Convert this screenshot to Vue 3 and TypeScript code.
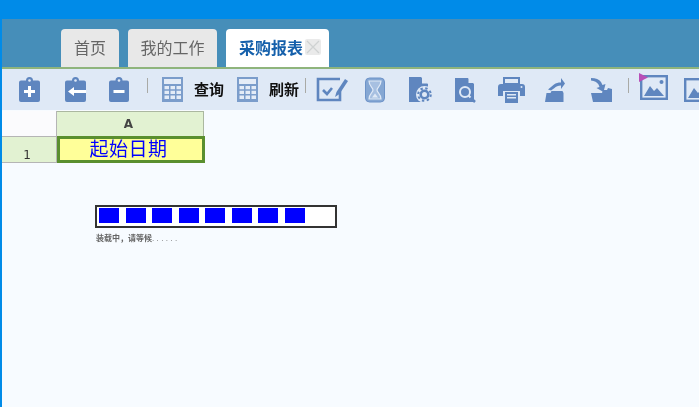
<script setup lang="ts">
const blocks: number[] = [0, 1, 2, 3, 4, 5, 6, 7]
</script>

<template>
  <div class="page">
    <div class="topbar"></div>
    <div class="main">
      <div class="tabs">
        <div class="tab t-home">首页</div>
        <div class="tab t-work">我的工作</div>
        <div class="tab active">
          <span>采购报表</span>
          <span class="close">
            <svg width="14" height="14" viewBox="0 0 14 14"><path d="M1 1L13 13M13 1L1 13" stroke="#cfd2d2" stroke-width="1.3" fill="none" /></svg>
          </span>
        </div>
      </div>
      <div class="toolbar">
        <svg class="ic i1" width="21" height="25" viewBox="0 0 21 25"><path d="M7 3.500a3.500 3.500 0 0 1 7 0h5a2 2 0 0 1 2 2V23a2 2 0 0 1-2 2H2a2 2 0 0 1-2-2V5.500a2 2 0 0 1 2-2z" fill="#5f86bf" /><circle cx="10.500" cy="3.500" r="1.300" fill="#dfe9f6" /><path d="M9 9h3v4h4v3h-4v4H9v-4H5v-3h4z" fill="#fff" /></svg>
        <svg class="ic i2" width="21" height="25" viewBox="0 0 21 25"><path d="M7 3.500a3.500 3.500 0 0 1 7 0h5a2 2 0 0 1 2 2V23a2 2 0 0 1-2 2H2a2 2 0 0 1-2-2V5.500a2 2 0 0 1 2-2z" fill="#5f86bf" /><circle cx="10.500" cy="3.500" r="1.300" fill="#dfe9f6" /><path d="M9 10v3h12v3H9v3l-6-4.500z" fill="#fff" /></svg>
        <svg class="ic i3" width="20" height="25" viewBox="0 0 20 25"><path d="M6.500 3.500a3.500 3.500 0 0 1 7 0H18a2 2 0 0 1 2 2V23a2 2 0 0 1-2 2H2a2 2 0 0 1-2-2V5.500a2 2 0 0 1 2-2z" fill="#5f86bf" /><circle cx="10" cy="3.500" r="1.300" fill="#dfe9f6" /><rect x="4.500" y="13" width="11" height="3" fill="#fff" /></svg>
        <span class="sep s1"></span>
        <svg class="ic i4" width="21" height="25" viewBox="0 0 21 25"><rect x="0" y="0" width="21" height="25" fill="#7b9dcb" /><rect x="2" y="2" width="17" height="5" fill="#e4ecf7" /><path d="M2.500 9h4.500v3.200H2.500zM8.500 9H13v3.200H8.500zM14.500 9h4.500v3.200h-4.500zM2.500 13.700h4.500v3.200H2.500zM8.500 13.700H13v3.200H8.500zM14.500 13.700h4.500v3.200h-4.500zM2.500 18.400h4.500V22H2.500zM8.500 18.400H13V22H8.500zM14.500 18.400h4.500V22h-4.500z" fill="#e4ecf7" /></svg>
        <span class="label l1">查询</span>
        <svg class="ic i5" width="21" height="25" viewBox="0 0 21 25"><rect x="0" y="0" width="21" height="25" fill="#7b9dcb" /><rect x="2" y="2" width="17" height="5" fill="#e4ecf7" /><path d="M2.500 9h4.500v3.200H2.500zM8.500 9H13v3.200H8.500zM14.500 9h4.500v3.200h-4.500zM2.500 13.700h4.500v3.200H2.500zM8.500 13.700H13v3.200H8.500zM14.500 13.700h4.500v3.200h-4.500zM2.500 18.400h4.500V22H2.500zM8.500 18.400H13V22H8.500zM14.500 18.400h4.500V22h-4.500z" fill="#e4ecf7" /></svg>
        <span class="label l2">刷新</span>
        <span class="sep s2"></span>
        <svg class="ic i6" width="32" height="25" viewBox="0 0 32 25"><path d="M24 2H2v21h22V13" fill="none" stroke="#5f86bf" stroke-width="2.600" /><path d="M7 13l4 4 5-6" fill="none" stroke="#5f86bf" stroke-width="2.600" /><path d="M19 20l1.500-5L29 2l3 2-8.500 13z" fill="#5f86bf" /></svg>
        <svg class="ic i7" width="20" height="26" viewBox="0 0 20 26"><rect x="0.500" y="1" width="19" height="24" rx="4" fill="#85a7d3" stroke="#6d93c8" /><path d="M4 4h12c0 5-4 6.500-4 9s4 4 4 9H4c0-5 4-6.500 4-9S4 9 4 4z" fill="#a7c0e1" stroke="#dfe9f6" stroke-width="1.200" /><path d="M7 20.500l3-4 3 4z" fill="#dfe9f6" /></svg>
        <svg class="ic i8" width="24" height="26" viewBox="0 0 24 26"><path d="M0 0h12l7 7v18H0z" fill="#5f86bf" /><path d="M13 0l6 6.500h-6z" fill="#dfe9f6" /><circle cx="15.500" cy="17.500" r="8.500" fill="#dfe9f6" /><circle cx="15.500" cy="17.500" r="3.800" fill="none" stroke="#5f86bf" stroke-width="2.600" /><circle cx="15.500" cy="17.500" r="6.300" fill="none" stroke="#5f86bf" stroke-width="2" stroke-dasharray="2.400 2.550" /></svg>
        <svg class="ic i9" width="21" height="26" viewBox="0 0 21 26"><path d="M0 1h13l6 6v18H0z" fill="#5f86bf" /><path d="M13.500 0.500l5.500 5.500h-5.500z" fill="#dfe9f6" /><circle cx="10" cy="15" r="5" fill="none" stroke="#dfe9f6" stroke-width="2" /><path d="M13.500 18.500l3 3" stroke="#dfe9f6" stroke-width="2" /><path d="M15.500 20.500l4.500 4.500" stroke="#5f86bf" stroke-width="2.500" /></svg>
        <svg class="ic i10" width="27" height="26" viewBox="0 0 27 26"><path d="M6 1h15v6H6z" fill="none" stroke="#5f86bf" stroke-width="2" /><path d="M3 7h21a3 3 0 0 1 3 3v9h-5v-5H5v5H0v-9a3 3 0 0 1 3-3z" fill="#5f86bf" /><path d="M7 15h13v11H7z" fill="#5f86bf" /><path d="M9 17h9v1.500H9zM9 20h9v1.500H9z" fill="#dfe9f6" /><circle cx="23.500" cy="10" r="1" fill="#dfe9f6" /></svg>
        <svg class="ic i11" width="21" height="26" viewBox="0 0 21 26"><path d="M0 25l1.500-9h4l1-2h11l1 2v9z" fill="#5f86bf" /><path d="M3 12.500l6-5c2-1.500 4-2 7-2V1l4 5.500-4 5.500V8.500c-3 0-5 1-6.500 2.500L6 13.500z" fill="#5f86bf" /></svg>
        <svg class="ic i12" width="22" height="26" viewBox="0 0 22 26"><path d="M13 13h4l1-2 4 1v13H3l-2-9h11z" fill="#5f86bf" /><path d="M1 1c5 0 8 1.500 10 4l1.500 3 3-1-2 8-7-4 3-1-1-2.500C7 5 4.500 4 1 3.500z" fill="#5f86bf" /></svg>
        <span class="sep s3"></span>
        <div class="pic i13">
          <svg width="29" height="27" viewBox="0 0 29 27"><rect x="2.200" y="3.200" width="25.600" height="22.600" fill="none" stroke="#5f86bf" stroke-width="2.400" /><path d="M5 23l6-10 4 5 3-3 7 8z" fill="#5f86bf" /><circle cx="22.500" cy="9" r="2" fill="#5f86bf" /><path d="M0 0l9 4.500L0 9z" fill="#b84fb8" /></svg>
        </div>
        <svg class="ic i14" width="28" height="24" viewBox="0 0 28 24"><rect x="1.200" y="1.200" width="25.600" height="21.600" fill="none" stroke="#5f86bf" stroke-width="2.400" /><path d="M4 20l6-10 4 5 3-3 7 8z" fill="#5f86bf" /></svg>
      </div>
      <div class="content">
        <div class="sheet">
          <div class="corner"></div>
          <div class="col-head">A</div>
          <div class="row-head">1</div>
          <div class="cell">起始日期</div>
        </div>
        <div class="progress">
          <span v-for="b in blocks" :key="b" class="block"></span>
        </div>
        <div class="loading">装载中，请等候<span class="dots">......</span></div>
      </div>
    </div>
  </div>
</template>

<style scoped>
.page {
  width: 699px;
  height: 407px;
  overflow: hidden;
  background: #008be8;
  font-family: "Liberation Sans", "Noto Sans CJK SC", sans-serif;
  display: flex;
  flex-direction: column;
  filter: blur(0.35px);
}
.topbar {
  height: 19px;
  flex: none;
}
.main {
  flex: 1;
  margin-left: 2px;
  display: flex;
  flex-direction: column;
  background: #f7fbff;
}
.tabs {
  height: 48px;
  flex: none;
  background: #468eb9;
  display: flex;
  align-items: flex-end;
  gap: 9px;
  padding-left: 59px;
  border-bottom: 2px solid #8fb47c;
  box-sizing: content-box;
}
.tab {
  height: 38px;
  box-sizing: border-box;
  background: #e8e8e8;
  border-radius: 4px 4px 0 0;
  color: #666;
  font-size: 16px;
  display: flex;
  align-items: center;
  justify-content: center;
  padding-bottom: 2px;
}
.t-home { width: 58px; }
.t-work { width: 89px; }
.active {
  width: 103px;
  background: #fff;
  color: #1560ab;
  font-weight: bold;
  justify-content: flex-start;
  padding-left: 13px;
}
.close {
  width: 16px;
  height: 16px;
  margin-left: 2px;
  background: #eaeaea;
  border-radius: 2px;
  display: flex;
  align-items: center;
  justify-content: center;
}
.toolbar {
  height: 41px;
  flex: none;
  background: #dfe9f6;
  display: flex;
  align-items: center;
  overflow: hidden;
}
.ic, .pic { flex: none; display: block; }
.sep {
  flex: none;
  width: 1px;
  height: 15px;
  background: #a9aaa6;
  margin-top: -9px;
}
.label {
  flex: none;
  font-size: 15px;
  font-weight: bold;
  color: #111;
  width: 31px;
  white-space: nowrap;
  margin-top: -3px;
}
.i1 { margin-left: 17px; }
.i2 { margin-left: 25px; }
.i3 { margin-left: 23px; }
.s1 { margin-left: 18px; }
.i4 { margin-left: 14px; }
.l1 { margin-left: 11px; }
.i5 { margin-left: 12px; }
.l2 { margin-left: 11px; }
.s2 { margin-left: 5px; }
.i6 { margin-left: 10px; }
.i7 { margin-left: 17px; }
.i8 { margin-left: 24px; }
.i9 { margin-left: 22px; }
.i10 { margin-left: 22px; }
.i11 { margin-left: 20px; }
.i12 { margin-left: 24px; }
.s3 { margin-left: 16px; }
.i13 { margin-left: 10px; margin-top: -2px; }
.i14 { margin-left: 16px; }
.content {
  flex: 1;
  padding-top: 1px;
}
.sheet {
  display: grid;
  grid-template-columns: 55px 147px;
  grid-template-rows: 26px 26px;
  width: 203px;
}
.corner {
  background: #fbfbfd;
  border-right: 1px solid #b5b5b5;
  border-bottom: 1px solid #b5b5b5;
}
.col-head {
  background: #e2f2d2;
  border-right: 1px solid #abb8a0;
  border-top: 1px solid #abb8a0;
  border-bottom: 1px solid #abb8a0;
  font: bold 12px "DejaVu Sans", sans-serif;
  color: #444;
  display: flex;
  align-items: center;
  justify-content: center;
  padding-right: 3px;
}
.row-head {
  background: #e2f2d2;
  border-bottom: 1px solid #b5b5b5;
  border-right: 1px solid #b5b5b5;
  font: 12px "DejaVu Sans", sans-serif;
  color: #333;
  display: flex;
  align-items: flex-end;
  justify-content: center;
  padding-right: 4px;
}
.cell {
  background: #ffff99;
  border: 3px solid #5a8f2e;
  width: 148px;
  height: 27px;
  box-sizing: border-box;
  margin-top: -1px;
  padding-right: 5px;
  color: #0000ff;
  font-size: 19px;
  letter-spacing: 0.5px;
  line-height: 22px;
  text-align: center;
  white-space: nowrap;
}
.progress {
  width: 242px;
  height: 23px;
  box-sizing: border-box;
  margin: 42px 0 0 93px;
  border: 2px solid #333;
  background: #fff;
  display: flex;
  gap: 6.500px;
  padding: 1px 0 0 2px;
}
.block {
  width: 20px;
  height: 15px;
  background: #0000ff;
  flex: none;
}
.loading {
  margin: 6px 0 0 94px;
  font-size: 8px;
  line-height: 10px;
  color: #666;
  font-weight: bold;
}
.dots {
  letter-spacing: 2.400px;
  font-weight: normal;
}
</style>
